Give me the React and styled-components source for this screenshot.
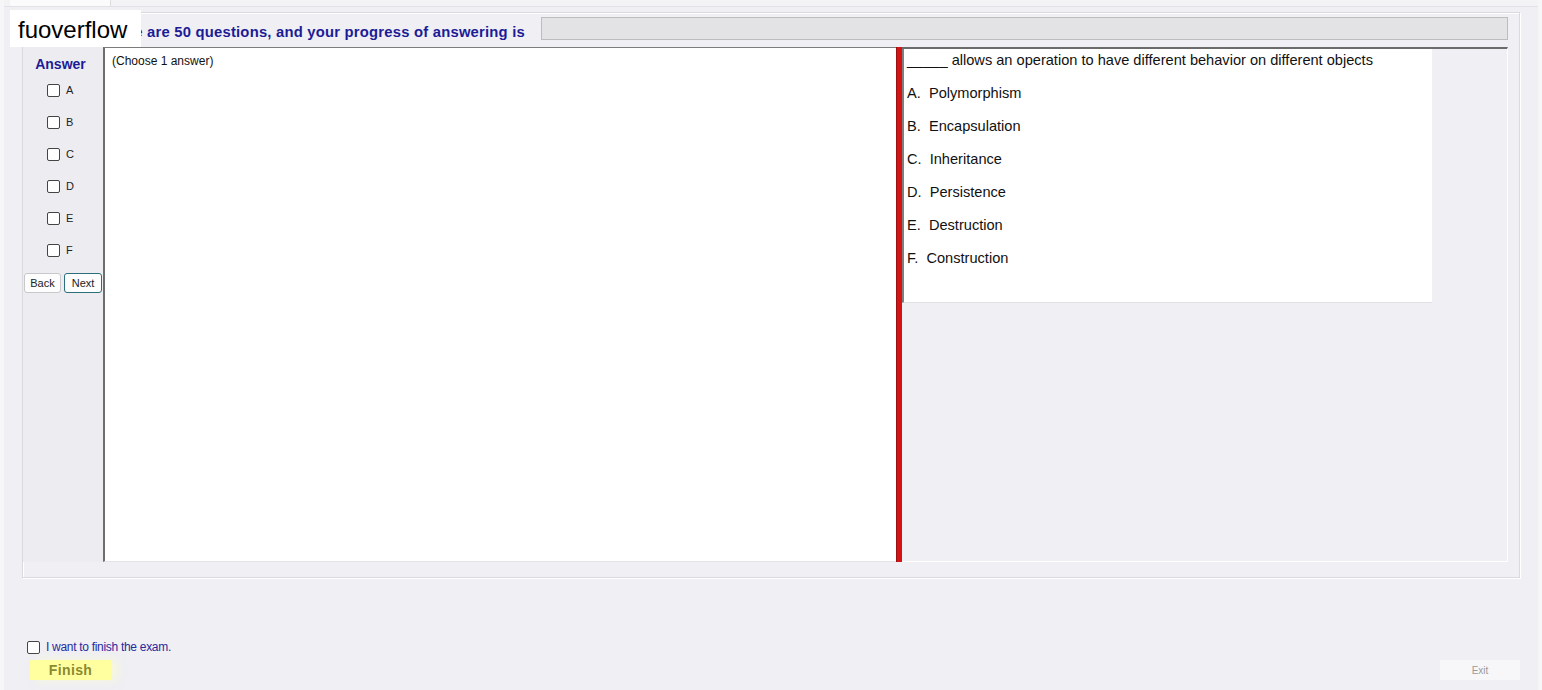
import React from "react";
import styled, { createGlobalStyle } from "styled-components";

const Global = createGlobalStyle`
  html, body { margin: 0; padding: 0; }
  body { font-family: "Liberation Sans", Arial, sans-serif; background: #f6f6f8; }
`;

const Page = styled.div`
  position: relative;
  width: 1542px;
  height: 690px;
  background: #f6f6f8;
  overflow: hidden;
`;

const Window = styled.div`
  margin: 0 4px;
  height: 690px;
  background: #efeff4;
  display: flex;
  flex-direction: column;
`;

const TopStrip = styled.div`
  height: 6px;
  display: flex;
  border-bottom: 1px solid #e2e2e6;
  background: #f3f3f5;
`;

const Tab = styled.div`
  margin-left: 6px;
  width: 100px;
  background: #fbfbfc;
  border-right: 1px solid #dcdcde;
`;

const GroupBox = styled.div`
  margin: 5px 18px 0 18px;
  padding-right: 11px;
  height: 564px;
  border: 1px solid #dadade;
  box-shadow: inset 1px 1px 0 #fff, 1px 1px 0 #fff;
  display: flex;
  flex-direction: column;
`;

const HeaderRow = styled.div`
  display: flex;
  align-items: center;
  height: 23px;
  margin-top: 4px;
  padding-left: 70px;
  gap: 16px;
`;

const HeaderText = styled.div`
  width: 432px;
  text-align: right;
  padding-top: 6px;
  font-size: 14.8px;
  letter-spacing: 0.22px;
  font-weight: bold;
  color: #1c1c96;
  white-space: nowrap;
`;

const Progress = styled.div`
  flex: 1;
  height: 21px;
  background: #e3e3e5;
  border: 1px solid #bdbdc0;
`;

const Body = styled.div`
  display: flex;
  margin-top: 7px;
  height: 515px;
`;

const AnswerCol = styled.div`
  width: 80px;
  display: flex;
  flex-direction: column;
  align-items: center;
  padding-top: 9px;
  background: #ededf1;
`;

const AnswerTitle = styled.div`
  font-size: 14px;
  font-weight: bold;
  color: #1c1c96;
  height: 16px;
  margin-right: 5px;
  margin-bottom: 2px;
`;

const ChoiceRow = styled.label`
  display: flex;
  align-items: center;
  gap: 6px;
  height: 32px;
  width: 36px;
  margin-left: 4px;
  font-size: 11px;
  color: #222;
`;

const Box = styled.span`
  display: inline-block;
  width: 11px;
  height: 11px;
  border: 1px solid #444;
  border-radius: 2px;
  background: #fff;
`;

const ButtonRow = styled.div`
  display: flex;
  gap: 3px;
  margin-top: 7px;
`;

const SmallButton = styled.div`
  width: ${p => p.w}px;
  height: 20px;
  box-sizing: border-box;
  border: 1px solid ${p => (p.focused ? "#2a6f7a" : "#c8c8cc")};
  border-radius: 3px;
  background: #fdfdfd;
  font-size: 11px;
  color: #222;
  display: flex;
  align-items: center;
  justify-content: center;
`;

const AnswerArea = styled.div`
  width: 793px;
  background: #fff;
  border-top: 1px solid #7c7c7c;
  border-left: 2px solid #6e6e6e;
  border-bottom: 1px solid #e4e4e8;
  padding: 6px 7px;
  box-sizing: border-box;
  font-size: 12px;
  color: #111;
`;

const Splitter = styled.div`
  width: 6px;
  background: #d41414;
  border-left: 1px solid #9a1010;
  box-sizing: border-box;
`;

const QuestionSide = styled.div`
  flex: 1;
  border-top: 2px solid #6b6b6b;
  border-right: 1px solid #fff;
  border-bottom: 1px solid #fff;
  background: #efeff4;
`;

const QuestionBox = styled.div`
  width: 530px;
  height: 254px;
  box-sizing: border-box;
  background: #fff;
  border-left: 2px solid #7f7f7f;
  border-bottom: 1px solid #e0e0e4;
  padding: 2px 0 0 3px;
  font-size: 14.6px;
  color: #111;
`;

const QLine = styled.div`
  height: 33px;
  line-height: 18px;
  white-space: pre;
`;

const Footer = styled.div`
  flex: 1;
  display: flex;
  align-items: flex-end;
  justify-content: space-between;
  padding: 0 18px 10px 23px;
`;

const FinishCol = styled.div`
  display: flex;
  flex-direction: column;
`;

const FinishCheck = styled.label`
  display: flex;
  align-items: center;
  gap: 6px;
  height: 16px;
  margin-bottom: 5px;
  font-size: 12px;
  color: #2a2a9c;
  letter-spacing: -0.3px;
`;

const FinishButton = styled.div`
  margin-left: 3px;
  width: 81px;
  height: 20px;
  background: #ffffa0;
  color: #8a8a30;
  font-size: 14px;
  letter-spacing: 0.4px;
  font-weight: bold;
  display: flex;
  align-items: center;
  justify-content: center;
  box-shadow: 6px 0 10px rgba(255, 255, 200, 0.6);
`;

const ExitButton = styled.div`
  width: 80px;
  height: 20px;
  background: #f7f7fa;
  color: #9a9a9a;
  font-size: 10px;
  display: flex;
  align-items: center;
  justify-content: center;
`;

const Logo = styled.div`
  position: absolute;
  left: 10px;
  top: 10px;
  width: 131px;
  height: 37px;
  box-sizing: border-box;
  padding: 3px 0 0 8px;
  background: #fff;
  font-size: 24px;
  color: #000;
  display: flex;
  align-items: center;
`;

const choices = ["A", "B", "C", "D", "E", "F"];
const options = [
  "A.  Polymorphism",
  "B.  Encapsulation",
  "C.  Inheritance",
  "D.  Persistence",
  "E.  Destruction",
  "F.  Construction",
];

export default function App() {
  return (
    <>
      <Global />
      <Page>
        <Window>
          <TopStrip>
            <Tab />
          </TopStrip>
          <GroupBox>
            <HeaderRow>
              <HeaderText>There are 50 questions, and your progress of answering is</HeaderText>
              <Progress />
            </HeaderRow>
            <Body>
              <AnswerCol>
                <AnswerTitle>Answer</AnswerTitle>
                {choices.map(c => (
                  <ChoiceRow key={c}>
                    <Box />
                    {c}
                  </ChoiceRow>
                ))}
                <ButtonRow>
                  <SmallButton w={37}>Back</SmallButton>
                  <SmallButton w={38} focused>Next</SmallButton>
                </ButtonRow>
              </AnswerCol>
              <AnswerArea>(Choose 1 answer)</AnswerArea>
              <Splitter />
              <QuestionSide>
                <QuestionBox>
                  <QLine>_____ allows an operation to have different behavior on different objects</QLine>
                  {options.map(o => (
                    <QLine key={o}>{o}</QLine>
                  ))}
                </QuestionBox>
              </QuestionSide>
            </Body>
          </GroupBox>
          <Footer>
            <FinishCol>
              <FinishCheck>
                <Box />
                I want to finish the exam.
              </FinishCheck>
              <FinishButton>Finish</FinishButton>
            </FinishCol>
            <ExitButton>Exit</ExitButton>
          </Footer>
        </Window>
        <Logo>fuoverflow</Logo>
      </Page>
    </>
  );
}
